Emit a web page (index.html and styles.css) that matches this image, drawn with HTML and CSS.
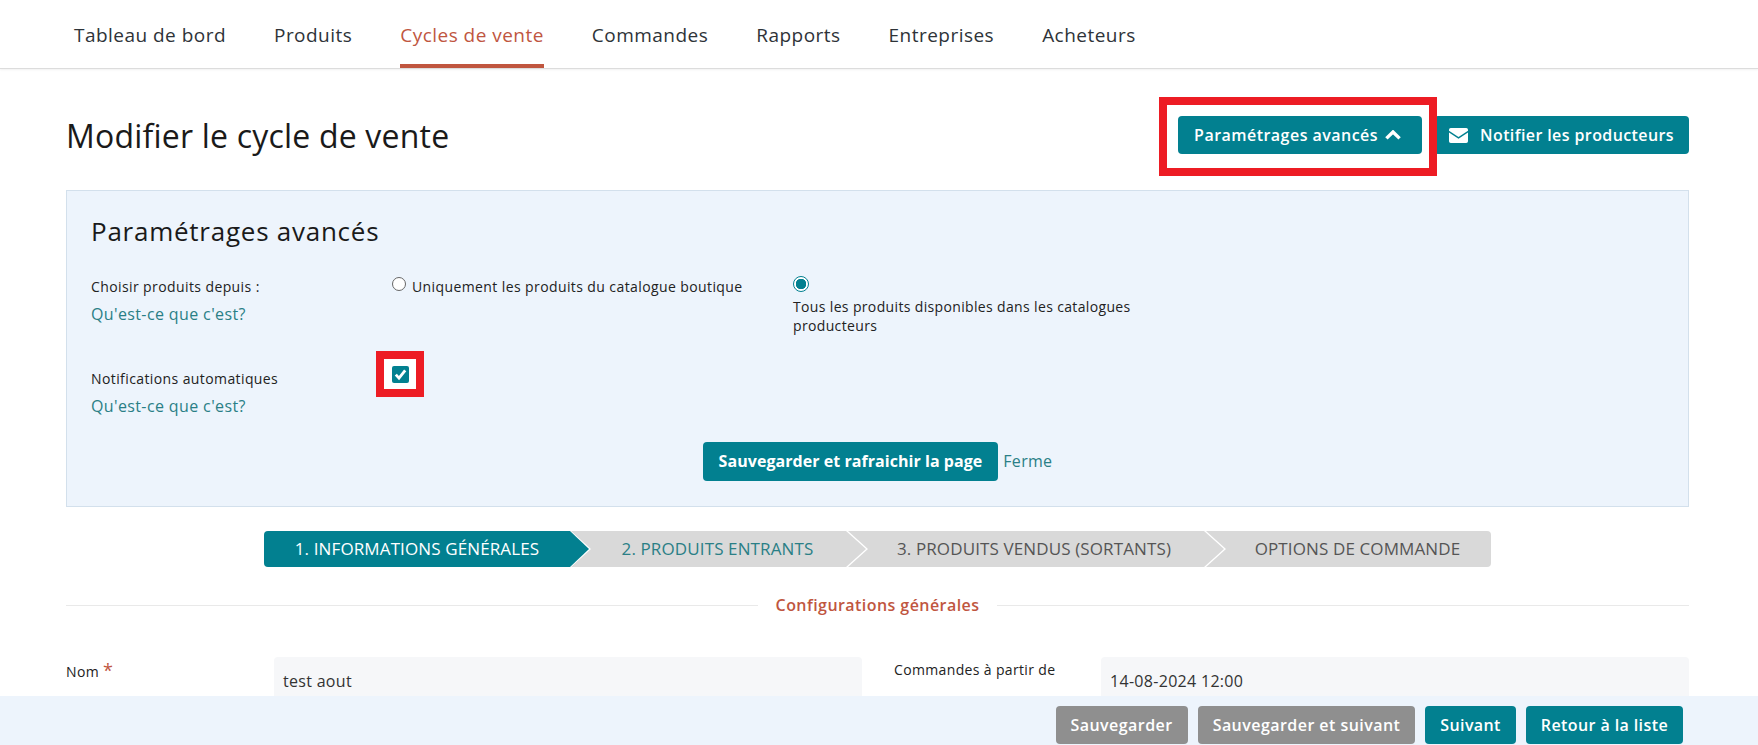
FILE: index.html
```html
<!DOCTYPE html>
<html lang="fr">
<head>
<meta charset="utf-8">
<title>Modifier le cycle de vente</title>
<link rel="stylesheet" href="styles.css">
</head>
<body>
<nav class="topnav">
  <a class="nav-item" href="#">Tableau de bord</a>
  <a class="nav-item" href="#">Produits</a>
  <a class="nav-item active" href="#">Cycles de vente</a>
  <a class="nav-item" href="#">Commandes</a>
  <a class="nav-item" href="#">Rapports</a>
  <a class="nav-item" href="#">Entreprises</a>
  <a class="nav-item" href="#">Acheteurs</a>
</nav>
<main class="page">
  <header class="page-head">
    <h1 class="page-title">Modifier le cycle de vente</h1>
    <div class="head-actions">
      <span class="red-frame"></span>
      <button class="btn btn-advanced" type="button">Paramétrages avancés
        <svg class="chev" viewBox="0 0 16 10" aria-hidden="true"><path d="M1.4 8.4 8 2l6.6 6.4" fill="none" stroke="#fff" stroke-width="3.4" stroke-linejoin="miter"/></svg>
      </button>
      <button class="btn btn-notify" type="button">
        <svg class="env" viewBox="0 0 19 15" aria-hidden="true"><path d="M1.8 0h15.4A1.8 1.8 0 0 1 19 1.8v.9L9.5 9 0 2.7v-.9A1.8 1.8 0 0 1 1.8 0Z" fill="#fff"/><path d="M0 4.6l9.5 6.2L19 4.6v8.6a1.8 1.8 0 0 1-1.8 1.8H1.8A1.8 1.8 0 0 1 0 13.2Z" fill="#fff"/></svg>
        Notifier les producteurs
      </button>
    </div>
  </header>

  <section class="panel">
    <h2 class="panel-title">Paramétrages avancés</h2>
    <div class="panel-row row-source">
      <div class="label-col">
        <div class="label">Choisir produits depuis :</div>
        <a class="help" href="#">Qu'est-ce que c'est?</a>
      </div>
      <div class="opt opt-first">
        <span class="radio"></span><span class="opt-text">Uniquement les produits du catalogue boutique</span>
      </div>
      <div class="opt-second">
        <span class="radio checked"></span>
        <div class="opt-text">Tous les produits disponibles dans les catalogues producteurs</div>
      </div>
    </div>
    <div class="panel-row row-notif">
      <div class="label-col">
        <div class="label">Notifications automatiques</div>
        <a class="help" href="#">Qu'est-ce que c'est?</a>
      </div>
      <span class="check-frame">
        <span class="check">
          <svg viewBox="0 0 17 17" aria-hidden="true"><path d="M3.8 8.6l3.2 3.6 6.2-7.8" fill="none" stroke="#fff" stroke-width="2.8"/></svg>
        </span>
      </span>
    </div>
    <div class="panel-foot">
      <button class="btn btn-save" type="button">Sauvegarder et rafraichir la page</button>
      <a class="close-link" href="#">Ferme</a>
    </div>
  </section>

  <ol class="wizard">
    <li class="step step-1">1. INFORMATIONS GÉNÉRALES</li>
    <li class="step step-2">2. PRODUITS ENTRANTS</li>
    <li class="step step-3">3. PRODUITS VENDUS (SORTANTS)</li>
    <li class="step step-4">OPTIONS DE COMMANDE</li>
  </ol>

  <div class="divider"><span class="divider-text">Configurations générales</span></div>

  <div class="fields">
    <label class="field-label">Nom <span class="star">*</span></label>
    <div class="input">test aout</div>
    <label class="field-label field-label-2">Commandes à partir de</label>
    <div class="input">14-08-2024 12:00</div>
  </div>
</main>
<footer class="savebar">
  <button class="btn btn-grey" type="button">Sauvegarder</button>
  <button class="btn btn-grey" type="button">Sauvegarder et suivant</button>
  <button class="btn" type="button">Suivant</button>
  <button class="btn" type="button">Retour à la liste</button>
</footer>
</body>
</html>
```
FILE: styles.css
```css
* { box-sizing: border-box; }
html, body { height: 100%; }
body {
  margin: 0;
  overflow: hidden;
  background: #fff;
  color: #222;
  font-family: "Open Sans", "Liberation Sans", sans-serif;
  font-size: 14px;
}
a { text-decoration: none; }

.topnav {
  display: flex;
  gap: 48px;
  height: 69px;
  padding-left: 74px;
  border-bottom: 1px solid #dcdcdc;
  box-shadow: 0 1px 2px rgba(0,0,0,.06);
}
.nav-item {
  height: 68px;
  padding-top: 22px;
  font-size: 19px;
  line-height: 26px;
  font-weight: 500;
  letter-spacing: .47px;
  color: #2e3338;
}
.nav-item.active {
  color: #c0563f;
  border-bottom: 4px solid #c0563f;
}

.page { padding: 0 69px 0 66px; }
.page-head {
  display: flex;
  justify-content: space-between;
  align-items: flex-start;
  padding-top: 47px;
  height: 121px;
}
.page-title {
  margin: 0;
  padding-top: 1px;
  font-size: 32px;
  line-height: 38px;
  font-weight: 500;
  color: #1a1a1a;
  letter-spacing: .2px;
}
.head-actions {
  position: relative;
  display: flex;
  gap: 12px;
}
.red-frame {
  position: absolute;
  left: -19px;
  top: -19px;
  width: 278px;
  height: 79px;
  border: 8px solid #ed1c24;
  z-index: 1;
}

.btn {
  display: inline-flex;
  align-items: center;
  height: 38px;
  padding: 0 15px;
  border: 0;
  border-radius: 4px;
  background: #028090;
  color: #fff;
  font: 600 16px/20px "Open Sans", "Liberation Sans", sans-serif;
  letter-spacing: .4px;
  white-space: nowrap;
}
.btn-advanced { padding: 0 21px 0 16px; letter-spacing: .47px; }
.chev { width: 16px; height: 10px; margin-left: 7px; }
.env { width: 19px; height: 15px; margin-right: 12px; }

.panel {
  height: 317px;
  padding: 24px 24px 0;
  background: #edf4fc;
  border: 1px solid #d3e0ec;
}
.panel-title {
  margin: 0;
  font-size: 26px;
  line-height: 32px;
  font-weight: 500;
  color: #1a1a1a;
  letter-spacing: .75px;
}
.panel-row { display: flex; align-items: flex-start; }
.row-source { height: 104px; padding-top: 30px; }
.row-notif { height: 91px; }
.label-col { width: 301px; flex: none; }
.label { font-size: 14px; line-height: 20px; color: #222; letter-spacing: .4px; }
.help {
  display: block;
  margin-top: 7px;
  font-size: 16px;
  line-height: 20px;
  color: #2a7f86;
  letter-spacing: .38px;
}
.row-notif .label-col { padding-top: 18px; }
.radio {
  display: inline-block;
  flex: none;
  width: 14px;
  height: 14px;
  border: 1px solid #666;
  border-radius: 50%;
  background: #fff;
}
.radio.checked {
  display: block;
  width: 16px;
  height: 16px;
  border: 1.5px solid #028090;
  background: radial-gradient(circle, #028090 0 5px, #fff 5.5px);
}
.opt { display: flex; width: 401px; flex: none; gap: 6px; }
.opt-text { font-size: 14px; line-height: 19px; letter-spacing: .4px; color: #222; }
.opt-second { width: 360px; margin-top: -1px; }
.opt-second .opt-text { margin-top: 5px; letter-spacing: .35px; }
.check-frame {
  display: flex;
  align-items: center;
  justify-content: center;
  width: 48px;
  height: 46px;
  margin-left: -16px;
  border: 8px solid #ed1c24;
  background: #fff;
}
.check { display: block; width: 17px; height: 17px; border-radius: 2px; background: #028090; }
.check svg { display: block; width: 17px; height: 17px; }
.panel-foot {
  display: flex;
  align-items: center;
  justify-content: center;
  gap: 5px;
}
.btn-save { height: 39px; font-weight: 700; padding: 0 16px 2px; letter-spacing: .05px; }
.close-link { padding-bottom: 2px; font-size: 16px; line-height: 20px; color: #2a7f86; letter-spacing: .3px; }

.wizard {
  display: flex;
  list-style: none;
  margin: 24px 0 0 198px;
  padding: 0;
  height: 36px;
  font-size: 17px;
  letter-spacing: .12px;
}
.step {
  display: flex;
  align-items: center;
  justify-content: center;
  flex: none;
  height: 36px;
  padding-bottom: 2px;
  background: #d9d9d9;
  color: #555;
  margin-right: -18px;
  clip-path: polygon(0 0, calc(100% - 20px) 0, 100% 50%, calc(100% - 20px) 100%, 0 100%, 20px 50%);
}
.step-1 {
  width: 325px;
  padding-right: 19px;
  background: #028090;
  color: #fff;
  border-radius: 4px 0 0 4px;
  clip-path: polygon(0 0, calc(100% - 19px) 0, 100% 50%, calc(100% - 19px) 100%, 0 100%);
}
.step-2 { width: 295px; color: #2a7f86; padding-right: 2px; }
.step-3 { width: 376px; padding-right: 4px; }
.step-4 {
  width: 285px;
  margin-right: 0;
  border-radius: 0 4px 4px 0;
  padding-left: 18px;
  clip-path: polygon(0 0, 100% 0, 100% 100%, 0 100%, 20px 50%);
}

.divider {
  display: flex;
  align-items: center;
  height: 20px;
  margin-top: 28px;
  font-size: 16px;
  font-weight: 600;
  letter-spacing: .44px;
  color: #c0563f;
}
.divider::before, .divider::after {
  content: "";
  flex: 1;
  height: 1px;
  background: #e9e9e9;
}
.divider-text { padding: 0 18px; }

.fields {
  display: grid;
  grid-template-columns: 208px 588px 239px 588px;
  margin-top: 42px;
}
.field-label { padding-top: 3px; font-size: 14px; line-height: 20px; font-weight: 500; color: #222; letter-spacing: .35px; }
.field-label-2 { padding-left: 32px; }
.star { font-size: 18px; color: #c0563f; }
.input {
  height: 60px;
  padding: 14px 9px;
  background: #f6f7f9;
  border-radius: 4px;
  font-size: 16px;
  line-height: 20px;
  color: #333;
  letter-spacing: .3px;
}

.savebar {
  position: fixed;
  left: 0;
  right: 0;
  bottom: 0;
  display: flex;
  justify-content: flex-end;
  gap: 10px;
  height: 49px;
  padding: 10px 75px 0 0;
  background: #edf4fc;
}
.btn-grey { background: #8f8f8f; letter-spacing: .45px; }
```
